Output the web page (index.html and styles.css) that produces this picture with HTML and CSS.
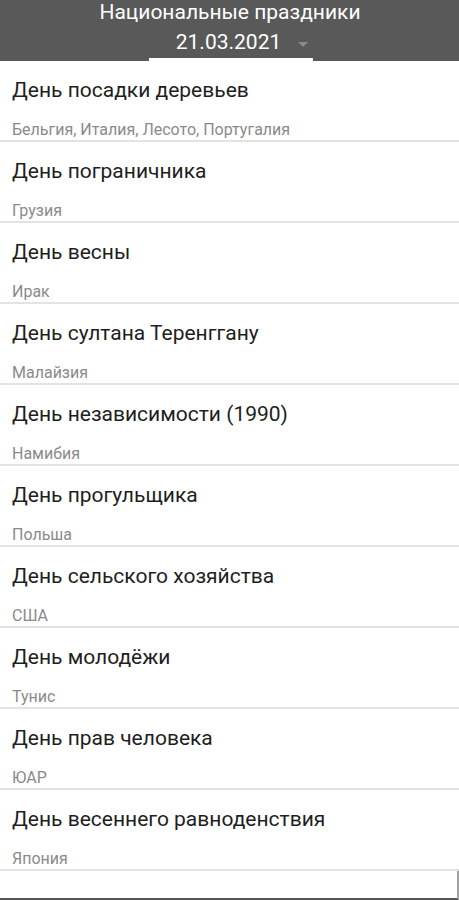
FILE: index.html
```html
<!DOCTYPE html>
<html lang="ru">
<head>
    <meta charset="UTF-8">
    <meta name="viewport" content="width=device-width, initial-scale=1.0">
    <title>Национальные праздники</title>
    <link rel="stylesheet" href="styles.css">
</head>
<body>
    <div class="header">
        <h1>Национальные праздники</h1>
        <div class="date-picker">
            <span class="date">21.03.2021</span>
            <span class="arrow"></span>
        </div>
    </div>

    <div class="list">
        <div class="item">
            <div class="item-title">День посадки деревьев</div>
            <div class="item-sub">Бельгия, Италия, Лесото, Португалия</div>
        </div>
        <div class="item">
            <div class="item-title">День пограничника</div>
            <div class="item-sub">Грузия</div>
        </div>
        <div class="item">
            <div class="item-title">День весны</div>
            <div class="item-sub">Ирак</div>
        </div>
        <div class="item">
            <div class="item-title">День султана Теренггану</div>
            <div class="item-sub">Малайзия</div>
        </div>
        <div class="item">
            <div class="item-title">День независимости (1990)</div>
            <div class="item-sub">Намибия</div>
        </div>
        <div class="item">
            <div class="item-title">День прогульщика</div>
            <div class="item-sub">Польша</div>
        </div>
        <div class="item">
            <div class="item-title">День сельского хозяйства</div>
            <div class="item-sub">США</div>
        </div>
        <div class="item">
            <div class="item-title">День молодёжи</div>
            <div class="item-sub">Тунис</div>
        </div>
        <div class="item">
            <div class="item-title">День прав человека</div>
            <div class="item-sub">ЮАР</div>
        </div>
        <div class="item">
            <div class="item-title">День весеннего равноденствия</div>
            <div class="item-sub">Япония</div>
        </div>
    </div>

    <div class="footer-box"></div>
</body>
</html>
```

FILE: styles.css
```css
* {
    box-sizing: border-box;
    margin: 0;
    padding: 0;
    font-family: Roboto, 'Liberation Sans', sans-serif;
}

body {
    background-color: #fff;
    width: 459px;
    height: 900px;
    overflow: hidden;
}

.header {
    background-color: #595959;
    height: 61px;
    display: flex;
    flex-direction: column;
    align-items: center;
}

.header h1 {
    color: #fff;
    font-size: 21px;
    font-weight: 400;
    line-height: 24px;
    margin-left: 1px;
}

.date-picker {
    display: flex;
    align-items: center;
    justify-content: center;
    width: 164px;
    height: 37px;
    margin-left: 2px;
    padding-top: 2px;
    padding-left: 23px;
    border-bottom: 3px solid #fff;
}

.date {
    color: #fff;
    font-size: 21px;
    line-height: 32px;
}

.arrow {
    width: 0;
    height: 0;
    margin-left: 17px;
    margin-top: 4px;
    border-left: 5px solid transparent;
    border-right: 5px solid transparent;
    border-top: 5px solid #8a8a8a;
}

.item {
    height: 81px;
    padding: 16px 12px 0;
    border-bottom: 2px solid #e3e3e3;
}

.item-title {
    color: #1e1e1e;
    font-size: 21px;
    line-height: 26px;
}

.item-sub {
    color: #8a8a8a;
    font-size: 16px;
    line-height: 18px;
    margin-top: 18px;
}

.footer-box {
    height: 30px;
    border-right: 2px solid #a0a0a0;
    border-bottom: 3px solid #555;
}
```
